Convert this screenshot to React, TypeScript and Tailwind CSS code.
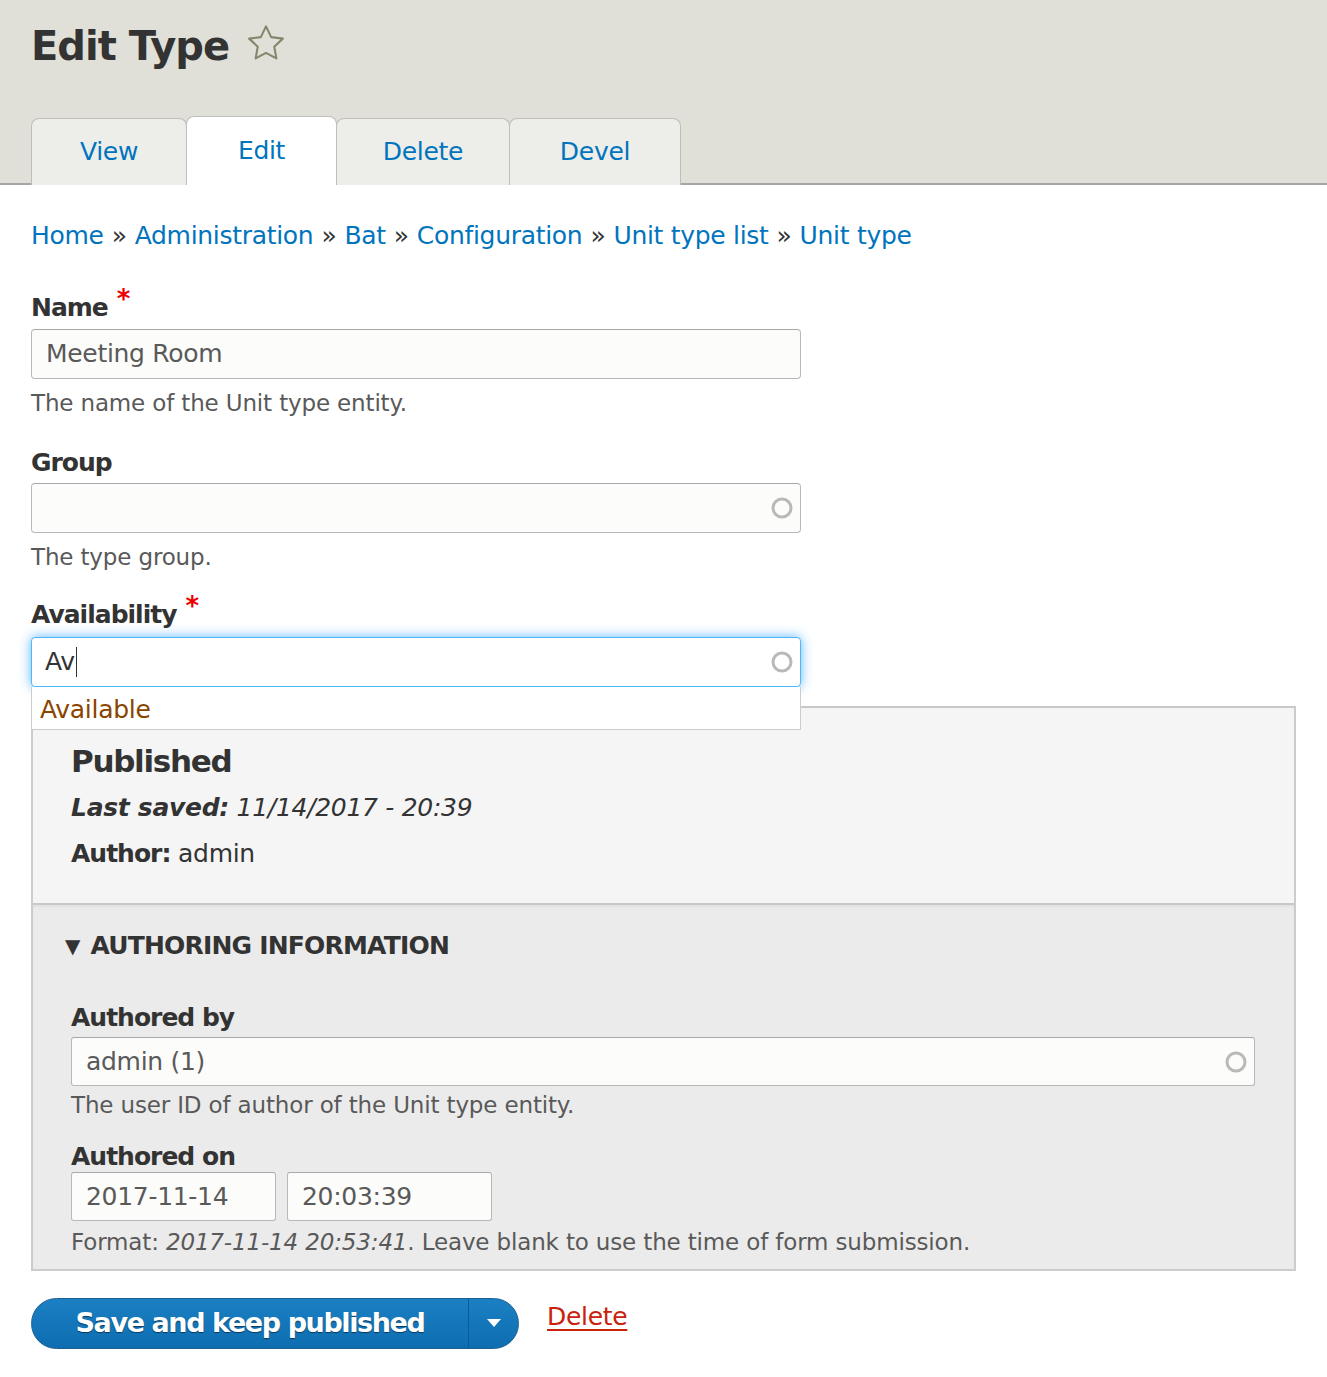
import React from 'react';

const tabs = [
  { label: 'View', w: 'w-[156px]', active: false },
  { label: 'Edit', w: 'w-[151px]', active: true },
  { label: 'Delete', w: 'w-[174px]', active: false },
  { label: 'Devel', w: 'w-[172px]', active: false },
];

const crumbs = ['Home', 'Administration', 'Bat', 'Configuration', 'Unit type list', 'Unit type'];

function Throbber() {
  return (
    <svg width="24" height="24" viewBox="0 0 24 24" className="shrink-0">
      <circle cx="12" cy="12" r="9" fill="none" stroke="#b9b9b9" strokeWidth="3" />
    </svg>
  );
}

function Star() {
  return (
    <svg width="46" height="46" viewBox="0 0 24 24" className="ml-[14px] -mt-[4px]">
      <path
        d="M12 2.8l2.7 5.6 6.1.8-4.5 4.2 1.1 6.1L12 16.6l-5.4 2.9 1.1-6.1-4.5-4.2 6.1-.8z"
        fill="none"
        stroke="#86866c"
        strokeWidth="1.1"
        strokeLinejoin="round"
      />
    </svg>
  );
}

function Required() {
  return <span className="ml-[9px] text-[#e00] relative -top-[8px] text-[26px] leading-none tracking-normal">*</span>;
}

export default function App() {
  return (
    <div className="min-h-[1377px] bg-white text-[#333] font-['DejaVu_Sans',sans-serif]">
      {/* Header */}
      <div className="bg-[#e0e0d8] border-b-2 border-[#a6a6a6]">
        <div className="px-[31px] pt-[22px] flex items-center">
          <h1 className="text-[40px] leading-[48px] font-semibold tracking-[-1px] text-[#333]">Edit Type</h1>
          <Star />
        </div>
        <div className="px-[31px] mt-[46px] flex items-end -mb-[2px]">
          {tabs.map(t => (
            <div
              key={t.label}
              className={`${t.w} h-[67px] flex items-center justify-center rounded-t-[8px] border border-[#bfbfba] -ml-px first:ml-0 text-[25px] tracking-[-0.3px] text-[#0074bd] ${
                t.active ? 'bg-white border-b-0 h-[69px] relative z-10' : 'bg-[#ededea] border-b-0'
              }`}
            >
              {t.label}
            </div>
          ))}
        </div>
      </div>

      {/* Content */}
      <div className="px-[31px]">
        <div className="mt-[35px] text-[25px] leading-[32px] tracking-[-0.3px] text-[#0074bd] flex flex-wrap gap-x-[8px]">
          {crumbs.map((c, i) => (
            <React.Fragment key={c}>
              {i > 0 && <span className="text-[#333]">»</span>}
              <span>{c}</span>
            </React.Fragment>
          ))}
        </div>

        {/* Name */}
        <div className="mt-[40px] text-[25px] leading-[32px] font-bold tracking-[-1px]">
          Name<Required />
        </div>
        <div className="mt-[5px] w-[770px] h-[50px] border border-[#b8b8b8] border-t-[#a8a8a8] rounded-[4px] bg-[#fcfcfa] flex items-center px-[14px] text-[25px] tracking-[-0.3px] text-[#595959]">
          Meeting Room
        </div>
        <div className="mt-[8px] text-[23px] leading-[32px] tracking-[-0.15px] text-[#595959]">The name of the Unit type entity.</div>

        {/* Group */}
        <div className="mt-[28px] text-[25px] leading-[32px] font-bold tracking-[-1px]">Group</div>
        <div className="mt-[4px] w-[770px] h-[50px] border border-[#b8b8b8] border-t-[#a8a8a8] rounded-[4px] bg-[#fcfcfa] flex items-center justify-end px-[6px]">
          <Throbber />
        </div>
        <div className="mt-[8px] text-[23px] leading-[32px] tracking-[-0.15px] text-[#595959]">The type group.</div>

        {/* Availability */}
        <div className="mt-[26px] text-[25px] leading-[32px] font-bold tracking-[-1px]">
          Availability<Required />
        </div>
        <div className="relative mt-[6px] w-[770px] z-20">
          <div className="h-[50px] border border-[#4db8ff] rounded-[4px] bg-white flex items-center justify-between pl-[13px] pr-[6px] text-[25px] tracking-[-0.3px] text-[#333] shadow-[0_0_12px_rgba(64,170,255,0.85)]">
            <span className="flex items-center">
              Av<span className="inline-block w-px h-[30px] bg-[#333] ml-[1px]" />
            </span>
            <Throbber />
          </div>
          <div className="absolute left-0 top-full w-full h-[43px] bg-white border border-[#ccc] border-t-0 flex items-center pt-[4px] px-[8px] text-[25px] tracking-[-0.3px] text-[#8a4400]">
            Available
          </div>
        </div>

        {/* Meta panel */}
        <div className="mt-[19px] border-2 border-[#ccc] border-t-[#c8c8c8]">
          <div className="bg-[#f5f5f5] pl-[38px] pt-[33px] pb-[33px]">
            <div className="text-[31px] leading-[40px] font-bold tracking-[-1.3px]">Published</div>
            <div className="mt-[11px] text-[25px] leading-[32px] tracking-[-0.3px] italic">
              <span className="font-bold">Last saved:</span> 11/14/2017 - 20:39
            </div>
            <div className="mt-[14px] text-[25px] leading-[32px] tracking-[-0.3px]">
              <span className="font-bold tracking-[-1px]">Author:</span> admin
            </div>
          </div>
          <div className="bg-[#ebebeb] border-t-2 border-[#c8c8c8] shadow-[inset_0_2px_2px_rgba(0,0,0,0.04)] pl-[38px] pr-[39px] pt-[25px] pb-[11px]">
            <div className="-ml-[6px] flex items-center text-[25px] leading-[32px] font-bold uppercase tracking-[-0.8px]">
              <span className="text-[20px] mr-[10px] tracking-normal">▼</span>
              Authoring information
            </div>
            <div className="mt-[40px] text-[25px] leading-[32px] font-bold tracking-[-1px]">Authored by</div>
            <div className="mt-[3px] h-[49px] border border-[#b8b8b8] border-t-[#a8a8a8] rounded-[3px] bg-[#fcfcfa] flex items-center justify-between pl-[14px] pr-[6px] text-[25px] tracking-[-0.3px] text-[#595959]">
              admin (1)
              <Throbber />
            </div>
            <div className="mt-[3px] text-[23px] leading-[32px] tracking-[-0.15px] text-[#595959]">The user ID of author of the Unit type entity.</div>
            <div className="mt-[22px] text-[25px] leading-[28px] font-bold tracking-[-1px]">Authored on</div>
            <div className="mt-[1px] flex gap-[11px]">
              <div className="w-[205px] h-[49px] border border-[#b8b8b8] border-t-[#a8a8a8] rounded-[3px] bg-[#fcfcfa] flex items-center pl-[14px] text-[25px] tracking-[-0.3px] text-[#595959]">
                2017-11-14
              </div>
              <div className="w-[205px] h-[49px] border border-[#b8b8b8] border-t-[#a8a8a8] rounded-[3px] bg-[#fcfcfa] flex items-center pl-[14px] text-[25px] tracking-[-0.3px] text-[#595959]">
                20:03:39
              </div>
            </div>
            <div className="mt-[5px] text-[23px] leading-[32px] tracking-[-0.15px] text-[#595959]">
              Format: <em>2017-11-14 20:53:41</em>. Leave blank to use the time of form submission.
            </div>
          </div>
        </div>

        {/* Actions */}
        <div className="mt-[27px] flex items-center">
          <div className="flex h-[51px] rounded-full border border-[#1e5f96] bg-[linear-gradient(to_bottom,#1b80c3,#0e6db1)] text-white overflow-hidden">
            <div className="w-[436px] flex items-center justify-center text-[27px] font-bold tracking-[-1.4px] [text-shadow:0_1px_1px_rgba(0,0,0,0.5)]">
              Save and keep published
            </div>
            <div className="w-[50px] border-l border-[#0c5a94] flex items-center justify-center">
              <svg width="14" height="9" viewBox="0 0 14 9">
                <path d="M0 0h14L7 8z" fill="#fff" />
              </svg>
            </div>
          </div>
          <span className="ml-[28px] -mt-[14px] text-[25px] tracking-[-0.3px] text-[#c8210c] underline underline-offset-[4px]">Delete</span>
        </div>
      </div>
    </div>
  );
}
